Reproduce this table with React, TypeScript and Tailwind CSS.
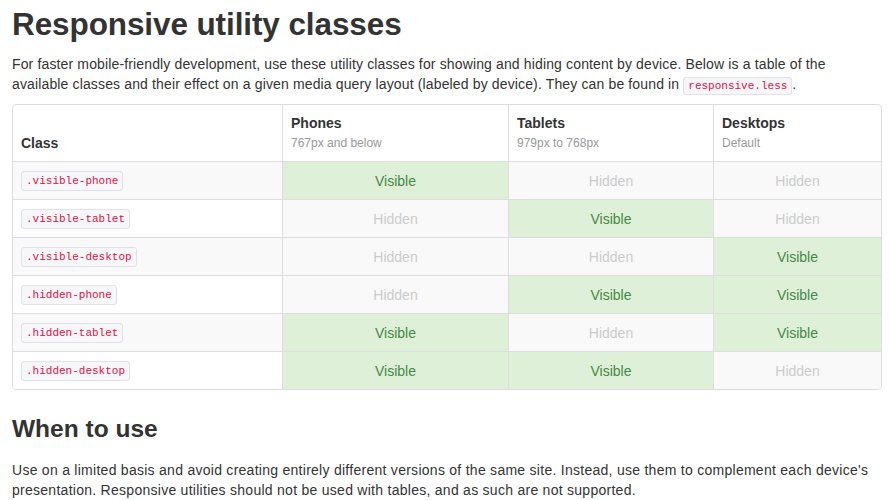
type Cell = 'v' | 'h';

const rows: { name: string; cells: [Cell, Cell, Cell] }[] = [
  { name: '.visible-phone', cells: ['v', 'h', 'h'] },
  { name: '.visible-tablet', cells: ['h', 'v', 'h'] },
  { name: '.visible-desktop', cells: ['h', 'h', 'v'] },
  { name: '.hidden-phone', cells: ['h', 'v', 'v'] },
  { name: '.hidden-tablet', cells: ['v', 'h', 'v'] },
  { name: '.hidden-desktop', cells: ['v', 'v', 'h'] },
];

const devices = [
  { title: 'Phones', note: '767px and below' },
  { title: 'Tablets', note: '979px to 768px' },
  { title: 'Desktops', note: 'Default' },
];

function Code({ children, inline }: { children: React.ReactNode; inline?: boolean }) {
  return (
    <code
      className={`${
        inline ? 'inline' : 'inline-block'
      } rounded-[3px] border border-[#e1e1e8] bg-[#f7f7f9] px-[4px] py-[2px] font-['Liberation_Mono',monospace] text-[11px] leading-[14px] tracking-normal text-[#dd1144]`}
    >
      {children}
    </code>
  );
}

export default function App() {
  return (
    <div className="min-h-[500px] bg-white px-[12px] pt-[4px] font-['Liberation_Sans',Arial,sans-serif] text-[14px] leading-[20px] text-[#333]">
      <div className="w-[870px]">
        <h1 className="text-[31.5px] font-bold leading-[40px] tracking-[-0.1px]">Responsive utility classes</h1>
        <p className="mt-[10px] tracking-[0.14px]">
          For faster mobile-friendly development, use these utility classes for showing and hiding content by device.
          Below is a table of the available classes and their effect on a given media query layout (labeled by
          device). They can be found in <Code inline>responsive.less</Code>.
        </p>

        <div className="mt-[10px] grid grid-cols-[269px_226px_205px_168px] overflow-hidden rounded-[4px] border border-[#ddd]">
          <div className="flex h-[56px] items-end px-[8px] pb-[8px] font-bold">Class</div>
          {devices.map((d) => (
            <div key={d.title} className="h-[56px] border-l border-[#ddd] px-[8px] pt-[8px]">
              <div className="font-bold">{d.title}</div>
              <div className="text-[12px] leading-[20px] text-[#999]">{d.note}</div>
            </div>
          ))}

          {rows.map((r, i) => (
            <div key={r.name} className="contents">
              <div
                className={`flex h-[38px] items-center border-t border-[#ddd] px-[8px] ${
                  i % 2 === 0 ? 'bg-[#f9f9f9]' : 'bg-white'
                }`}
              >
                <Code>{r.name}</Code>
              </div>
              {r.cells.map((c, j) => (
                <div
                  key={j}
                  className={`flex h-[38px] items-center justify-center border-l border-t border-[#ddd] ${
                    c === 'v' ? 'bg-[#dff0d8] text-[#468847]' : 'bg-[#f9f9f9] text-[#ccc]'
                  }`}
                >
                  {c === 'v' ? 'Visible' : 'Hidden'}
                </div>
              ))}
            </div>
          ))}
        </div>

        <h2 className="mt-[19px] text-[24.5px] font-bold leading-[40px]">When to use</h2>
        <p className="mt-[11px] tracking-[0.27px]">
          Use on a limited basis and avoid creating entirely different versions of the same site. Instead, use them to
          complement each device's presentation. Responsive utilities should not be used with tables, and as such are
          not supported.
        </p>
      </div>
    </div>
  );
}
